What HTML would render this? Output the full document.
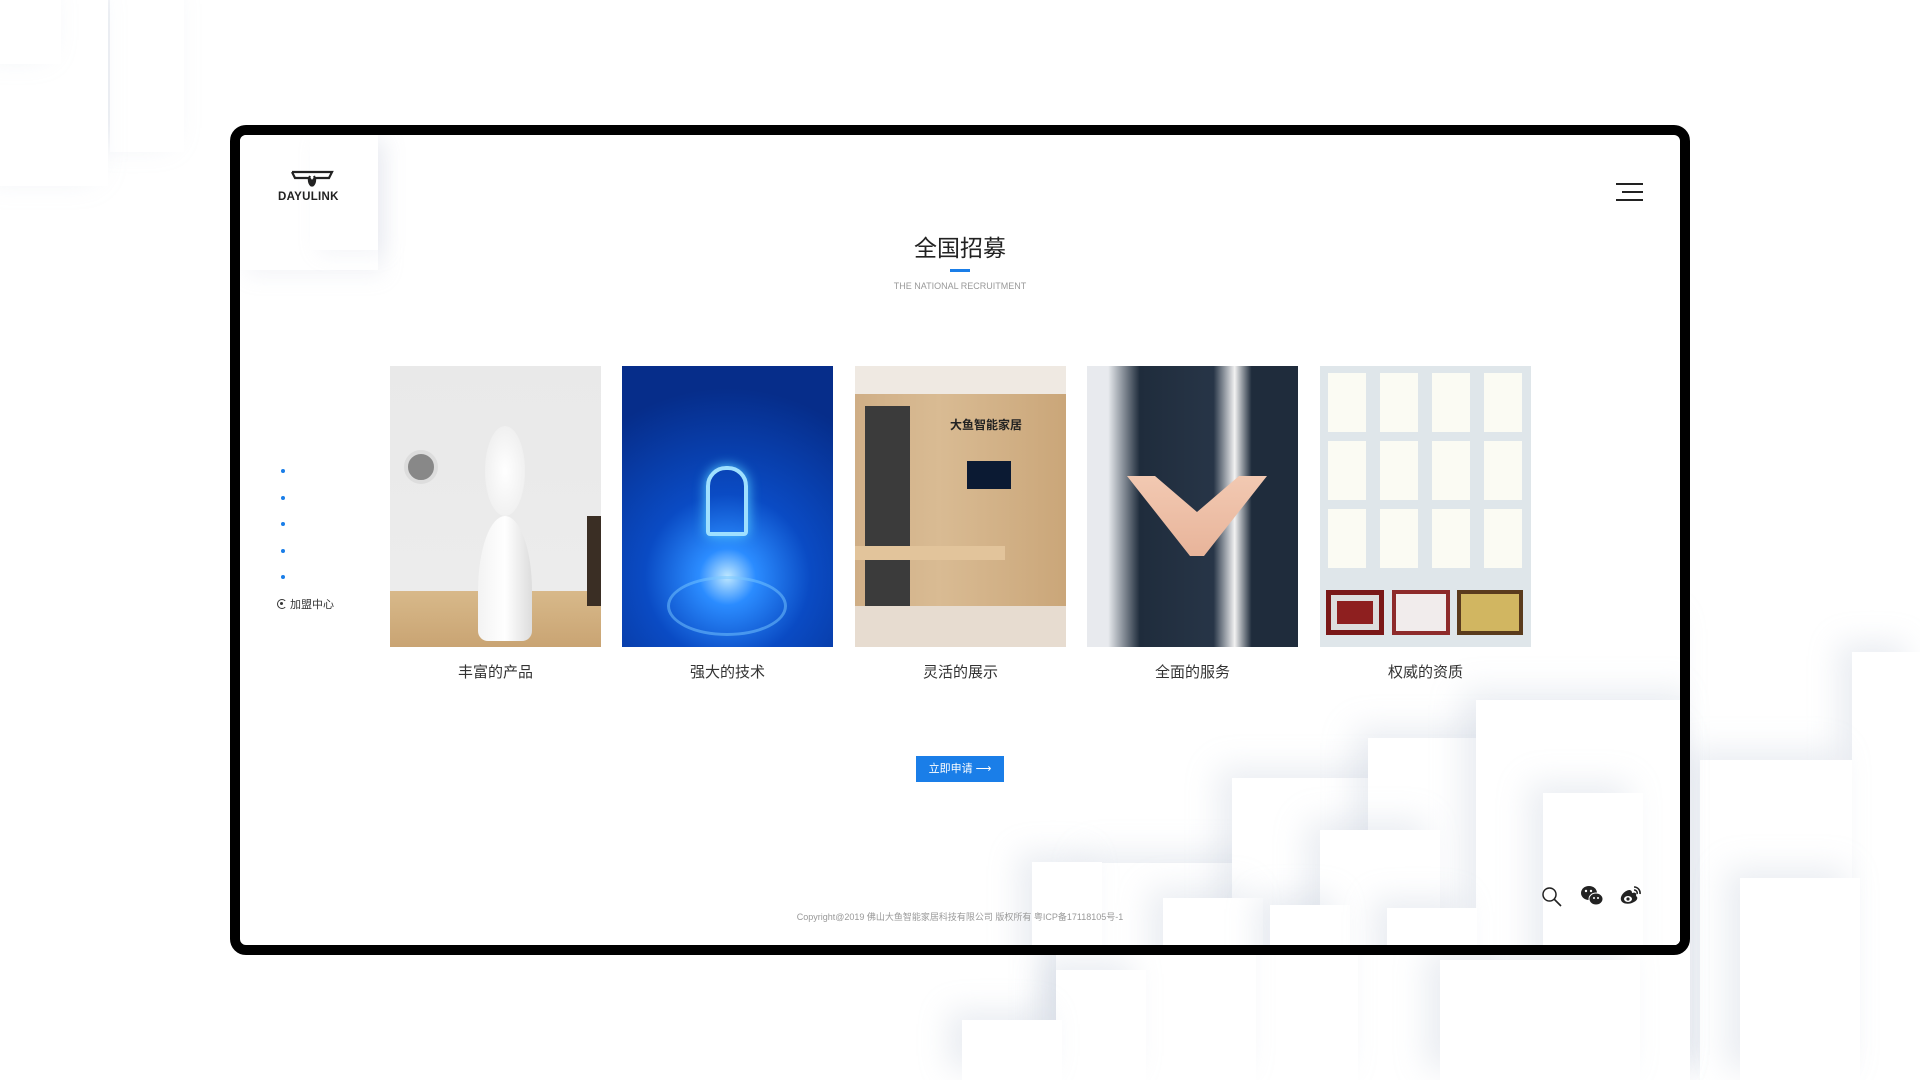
<!DOCTYPE html>
<html><head><meta charset="utf-8">
<style>
*{margin:0;padding:0;box-sizing:border-box}
body{width:1920px;height:1080px;overflow:hidden;background:#fff;position:relative;font-family:"Liberation Sans","Noto Sans CJK SC",sans-serif}
.b{position:absolute;background:#fff;box-shadow:-14px -10px 30px rgba(180,190,210,.28)}
.frame{position:absolute;left:230px;top:125px;width:1460px;height:830px;border:10px solid #000;border-radius:16px;background:#fff;overflow:hidden}
.in{position:absolute;left:-240px;top:-135px;width:1920px;height:1080px}
.card{position:absolute;top:366px;width:211px;height:281px;overflow:hidden}
.lab{position:absolute;top:661px;width:211px;text-align:center;font-size:15px;color:#333}
.dot{position:absolute;left:281px;width:4px;height:4px;border-radius:50%;background:#1a7ee8}
</style></head><body>
<div class="b" style="left:110px;top:0;width:74px;height:152px"></div>
<div class="b" style="left:0;top:0;width:108px;height:186px"></div>
<div class="b" style="left:0;top:0;width:61px;height:64px"></div>
<div class="b" style="left:1630px;top:625px;width:60px;height:455px"></div>
<div class="b" style="left:1852px;top:652px;width:68px;height:428px"></div>
<div class="b" style="left:1700px;top:760px;width:152px;height:320px"></div>
<div class="b" style="left:1740px;top:878px;width:120px;height:202px"></div>
<div class="b" style="left:1476px;top:700px;width:214px;height:380px"></div>
<div class="b" style="left:1370px;top:738px;width:320px;height:342px"></div>
<div class="b" style="left:1230px;top:778px;width:260px;height:302px"></div>
<div class="b" style="left:1098px;top:816px;width:260px;height:264px"></div>
<div class="b" style="left:1056px;top:863px;width:200px;height:217px"></div>
<div class="b" style="left:1440px;top:960px;width:200px;height:120px"></div>
<div class="b" style="left:1056px;top:970px;width:90px;height:110px"></div>
<div class="b" style="left:962px;top:1020px;width:100px;height:60px"></div>

<div class="frame"><div class="in">
  <div class="b" style="left:240px;top:135px;width:138px;height:135px;box-shadow:6px 6px 20px rgba(180,190,210,.15)"></div>
  <div class="b" style="left:310px;top:135px;width:68px;height:115px;box-shadow:8px 4px 20px rgba(180,190,210,.15)"></div>
  <div class="b" style="left:1097px;top:863px;width:600px;height:220px"></div>
  <div class="b" style="left:1232px;top:778px;width:500px;height:300px"></div>
  <div class="b" style="left:1368px;top:738px;width:330px;height:340px"></div>
  <div class="b" style="left:1476px;top:700px;width:230px;height:380px"></div>
  <div class="b" style="left:1543px;top:793px;width:100px;height:290px"></div>
  <div class="b" style="left:1320px;top:830px;width:120px;height:250px"></div>
  <div class="b" style="left:1163px;top:898px;width:100px;height:200px"></div>
  <div class="b" style="left:1270px;top:905px;width:80px;height:200px"></div>
  <div class="b" style="left:1032px;top:862px;width:70px;height:220px"></div>
  <div class="b" style="left:1387px;top:908px;width:90px;height:200px"></div>
  <svg style="position:absolute;left:290px;top:170px" width="44" height="18" viewBox="0 0 44 18"><path d="M2 2h40l-3 6h-12M2 2l3 6h12M17 8c3 0 5 2 5 8c0-6 2-8 5-8M22 16c-3-2-4-6-2-10M22 16c3-2 4-6 2-10" fill="none" stroke="#222" stroke-width="2.2"/></svg>
  <div style="position:absolute;left:278px;top:191px;font-size:11.5px;font-weight:bold;color:#222;letter-spacing:.3px">DAYULINK</div>
  <div style="position:absolute;left:1616px;top:183px;width:27px;height:2px;background:#222"></div>
  <div style="position:absolute;left:1622px;top:191px;width:21px;height:2px;background:#222"></div>
  <div style="position:absolute;left:1616px;top:199px;width:27px;height:2px;background:#222"></div>
  <div style="position:absolute;left:0;width:1920px;top:229px;text-align:center;font-size:23px;color:#222">全国招募</div>
  <div style="position:absolute;left:950px;top:269px;width:20px;height:3px;background:#1a7ee8"></div>
  <div style="position:absolute;left:0;width:1920px;top:281px;text-align:center;font-size:9px;color:#999">THE NATIONAL RECRUITMENT</div>
  <div class="dot" style="top:469px"></div><div class="dot" style="top:496px"></div><div class="dot" style="top:522px"></div><div class="dot" style="top:549px"></div><div class="dot" style="top:575px"></div>
  <div style="position:absolute;left:277px;top:596px;font-size:11px;color:#333;display:flex;align-items:center"><span style="display:inline-block;width:10px;height:10px;border:1.5px solid #333;border-right-color:transparent;border-radius:50%;margin-right:3px;position:relative"><i style="position:absolute;left:2px;top:2px;width:3px;height:3px;background:#333;border-radius:50%"></i></span>加盟中心</div>
  <div class="card" style="left:390px;background:linear-gradient(#e9e9e9,#ececec 80%,#d8b98a 80%,#c9a473)">
    <div style="position:absolute;left:14px;top:84px;width:34px;height:34px;border-radius:50%;background:#888;border:4px solid #ddd"></div>
    <div style="position:absolute;left:88px;top:150px;width:54px;height:125px;border-radius:50% 50% 10px 10px/60% 60% 10px 10px;background:linear-gradient(90deg,#f3f3f3,#fff,#ddd)"></div>
    <div style="position:absolute;left:95px;top:60px;width:40px;height:90px;border-radius:50%;background:radial-gradient(#fff,rgba(255,255,255,0))"></div>
    <div style="position:absolute;left:197px;top:150px;width:14px;height:90px;background:#3a2e24"></div>
  </div>
  <div class="card" style="left:622px;background:radial-gradient(circle at 50% 75%,#bfe8ff 0,#2b8cff 12%,#0a4bc4 35%,#062d8a 80%)">
    <div style="position:absolute;left:84px;top:100px;width:42px;height:70px;border:4px solid #9fe0ff;border-radius:20px 20px 4px 4px;box-shadow:0 0 12px #5cf"></div>
    <div style="position:absolute;left:45px;top:210px;width:120px;height:60px;border:3px solid rgba(120,200,255,.5);border-radius:50%"></div>
  </div>
  <div class="card" style="left:855px;background:linear-gradient(90deg,#cfae86,#d9bb93 40%,#caa679);">
    <div style="position:absolute;left:0;top:0;width:211px;height:28px;background:#efe9e2"></div>
    <div style="position:absolute;left:10px;top:40px;width:45px;height:200px;background:#3b3b3b"></div>
    <div style="position:absolute;left:112px;top:95px;width:44px;height:28px;background:#0b1a33"></div>
    <div style="position:absolute;left:95px;top:50px;font-size:12px;color:#222;font-weight:bold">大鱼智能家居</div>
    <div style="position:absolute;left:0;top:180px;width:150px;height:14px;background:#e2c49b"></div>
    <div style="position:absolute;left:0;top:240px;width:211px;height:41px;background:#e7dcd0"></div>
  </div>
  <div class="card" style="left:1087px;background:linear-gradient(90deg,#e8eaee,#e8eaee 10%,#1f2c3c 25%,#273547 60%,#f2f2f2 70%,#1f2c3c 78%)">
    <div style="position:absolute;left:40px;top:110px;width:140px;height:80px;background:linear-gradient(#f2c9b2,#e8b49a);clip-path:polygon(0 0,20% 0,50% 45%,80% 0,100% 0,55% 100%,45% 100%)"></div>
  </div>
  <div class="card" style="left:1320px;background:#dfe6ea">
    <div style="position:absolute;left:8px;top:7px;width:196px;height:200px;background:repeating-linear-gradient(90deg,#fbfbf3 0 38px,transparent 38px 52px);-webkit-mask:repeating-linear-gradient(#000 0 59px,transparent 59px 68px)"></div>
    <div style="position:absolute;left:6px;top:224px;width:58px;height:45px;background:#8e1f1f;border:5px solid #7a1818;box-shadow:inset 0 0 0 6px #ddd"></div>
    <div style="position:absolute;left:72px;top:224px;width:58px;height:45px;background:#f1ecec;border:4px solid #8e2b2b"></div>
    <div style="position:absolute;left:137px;top:224px;width:66px;height:45px;background:#d1b661;border:4px solid #5a3b1d"></div>
  </div>
  <div class="lab" style="left:390px">丰富的产品</div>
  <div class="lab" style="left:622px">强大的技术</div>
  <div class="lab" style="left:855px">灵活的展示</div>
  <div class="lab" style="left:1087px">全面的服务</div>
  <div class="lab" style="left:1320px">权威的资质</div>
  <div style="position:absolute;left:916px;top:756px;width:88px;height:26px;background:#1a7ee8;color:#fff;font-size:11px;line-height:26px;text-align:center">立即申请 ⟶</div>
  <div style="position:absolute;left:0;width:1920px;top:910px;text-align:center;font-size:9px;color:#999">Copyright@2019 佛山大鱼智能家居科技有限公司 版权所有 粤ICP备17118105号-1</div>
  <svg style="position:absolute;left:1541px;top:886px" width="22" height="22" viewBox="0 0 22 22"><circle cx="8.5" cy="8.5" r="6.5" fill="none" stroke="#222" stroke-width="1.5"/><path d="M13 13l7 7" stroke="#222" stroke-width="1.6"/></svg>
  <svg style="position:absolute;left:1580px;top:885px" width="24" height="22" viewBox="0 0 24 22"><ellipse cx="9" cy="8" rx="8" ry="7" fill="#222"/><ellipse cx="16" cy="14" rx="7" ry="6" fill="#222" stroke="#fff" stroke-width="1"/><circle cx="6" cy="6" r="1.2" fill="#fff"/><circle cx="11" cy="6" r="1.2" fill="#fff"/><circle cx="14" cy="13" r="1" fill="#fff"/><circle cx="18" cy="13" r="1" fill="#fff"/></svg>
  <svg style="position:absolute;left:1619px;top:884px" width="24" height="22" viewBox="0 0 24 22"><path d="M10 6c-5 1-9 6-8 10 1 4 8 5 13 2 4-2 4-5 2-6 1-3-1-4-4-3 0-2-1-3-3-3z" fill="#222"/><ellipse cx="9" cy="15" rx="4" ry="3" fill="#fff"/><circle cx="9" cy="15" r="1.6" fill="#222"/><path d="M15 3a6 6 0 0 1 6 7M15 6a3 3 0 0 1 3 4" fill="none" stroke="#222" stroke-width="1.6"/></svg>
</div></div>
</body></html>
